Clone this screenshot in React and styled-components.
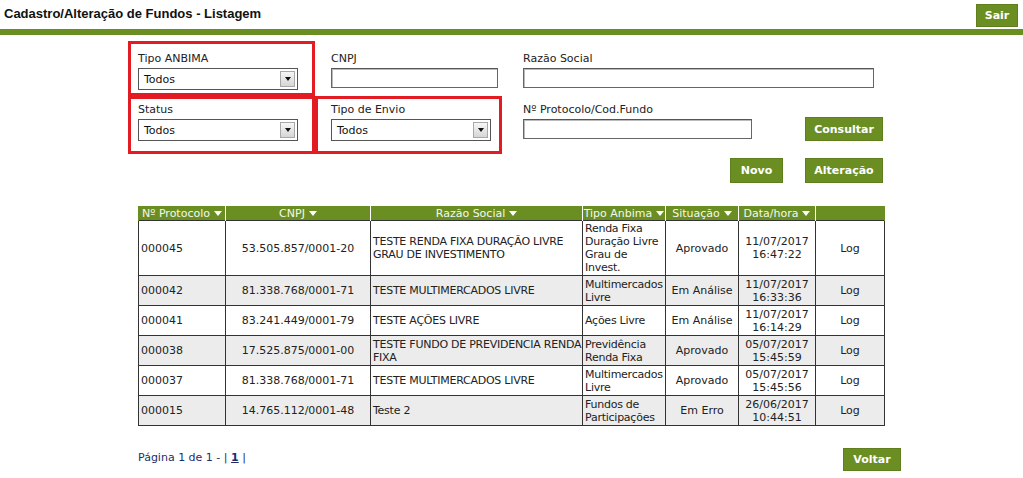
import React from 'react';
import styled, { createGlobalStyle } from 'styled-components';

const GREEN = '#6b8e23';
const RED = '#e31b23';

const GlobalStyle = createGlobalStyle`
  body {
    margin: 0;
    background: #ffffff;
    font-family: Verdana, 'DejaVu Sans', sans-serif;
    font-size: 11px;
    color: #222;
  }
`;

const rows = [
  { protocolo: '000045', cnpj: '53.505.857/0001-20', razao: 'TESTE RENDA FIXA DURAÇÃO LIVRE GRAU DE INVESTIMENTO', tipo: 'Renda Fixa Duração Livre Grau de Invest.', situacao: 'Aprovado', data: '11/07/2017', hora: '16:47:22' },
  { protocolo: '000042', cnpj: '81.338.768/0001-71', razao: 'TESTE MULTIMERCADOS LIVRE', tipo: 'Multimercados Livre', situacao: 'Em Análise', data: '11/07/2017', hora: '16:33:36' },
  { protocolo: '000041', cnpj: '83.241.449/0001-79', razao: 'TESTE AÇÕES LIVRE', tipo: 'Ações Livre', situacao: 'Em Análise', data: '11/07/2017', hora: '16:14:29' },
  { protocolo: '000038', cnpj: '17.525.875/0001-00', razao: 'TESTE FUNDO DE PREVIDENCIA RENDA FIXA', tipo: 'Previdência Renda Fixa', situacao: 'Aprovado', data: '05/07/2017', hora: '15:45:59' },
  { protocolo: '000037', cnpj: '81.338.768/0001-71', razao: 'TESTE MULTIMERCADOS LIVRE', tipo: 'Multimercados Livre', situacao: 'Aprovado', data: '05/07/2017', hora: '15:45:56' },
  { protocolo: '000015', cnpj: '14.765.112/0001-48', razao: 'Teste 2', tipo: 'Fundos de Participações', situacao: 'Em Erro', data: '26/06/2017', hora: '10:44:51' }
];

const columns = [
  { label: 'Nº Protocolo', width: 87 },
  { label: 'CNPJ', width: 145 },
  { label: 'Razão Social', width: 212 },
  { label: 'Tipo Anbima', width: 83 },
  { label: 'Situação', width: 73 },
  { label: 'Data/hora', width: 77 },
  { label: '', width: 69 }
];

const SortArrow = () => (
  <ArrowIcon width="8" height="5" viewBox="0 0 8 5">
    <path d="M0 0 L8 0 L4 5 Z" fill="#ffffff" />
  </ArrowIcon>
);

const Select = ({ value }) => (
  <SelectBox>
    <SelectText>{value}</SelectText>
    <SelectArrow>
      <svg width="6" height="4" viewBox="0 0 6 4">
        <path d="M0 0 L6 0 L3 4 Z" fill="#111" />
      </svg>
    </SelectArrow>
  </SelectBox>
);

export default function App() {
  return (
    <>
      <GlobalStyle />
      <Header>
        <Title>Cadastro/Alteração de Fundos - Listagem</Title>
        <Button $width={42}>Sair</Button>
      </Header>
      <GreenBar />

      <Form>
        <FilterGrid>
          <Cell $marked $top={8}>
            <Label>Tipo ANBIMA</Label>
            <Select value="Todos" />
          </Cell>
          <Cell $top={8} $left={13}>
            <Label>CNPJ</Label>
            <TextInput $width={167} />
          </Cell>
          <WideCell $top={11}>
            <Label>Razão Social</Label>
            <TextInput $width={351} />
          </WideCell>
          <Cell $marked $top={4}>
            <Label>Status</Label>
            <Select value="Todos" />
          </Cell>
          <Cell $marked $top={4} $left={13}>
            <Label>Tipo de Envio</Label>
            <Select value="Todos" />
          </Cell>
          <WideCell $top={7}>
            <SearchRow>
              <div>
                <Label>Nº Protocolo/Cod.Fundo</Label>
                <TextInput $width={229} />
              </div>
              <Button $width={78} $height={24} $drop={2}>
                Consultar
              </Button>
            </SearchRow>
          </WideCell>
        </FilterGrid>
        <ActionRow>
          <Button $width={53} $height={25}>Novo</Button>
          <Button $width={78} $height={25}>Alteração</Button>
        </ActionRow>
      </Form>

      <Table>
        <colgroup>
          {columns.map((c, i) => (
            <col key={i} style={{ width: c.width }} />
          ))}
        </colgroup>
        <thead>
          <tr>
            {columns.map((c, i) => (
              <Th key={i}>
                {c.label}
                {c.label && <SortArrow />}
              </Th>
            ))}
          </tr>
        </thead>
        <tbody>
          {rows.map((r, i) => (
            <Tr key={r.protocolo} $alt={i % 2 === 1}>
              <Td>{r.protocolo}</Td>
              <Td $center>{r.cnpj}</Td>
              <Td $tight>{r.razao}</Td>
              <Td $tight>{r.tipo}</Td>
              <Td $center>{r.situacao}</Td>
              <Td $center>
                {r.data}
                <br />
                {r.hora}
              </Td>
              <Td $center>Log</Td>
            </Tr>
          ))}
        </tbody>
      </Table>

      <Footer>
        <Pager>
          Página 1 de 1 - | <CurrentPage>1</CurrentPage> |
        </Pager>
        <Button $width={58}>Voltar</Button>
      </Footer>
    </>
  );
}

const Header = styled.div`
  display: flex;
  justify-content: space-between;
  align-items: flex-start;
  padding: 4px 5px 2px 4px;
  height: 23px;
`;

const Title = styled.h1`
  margin: 2px 0 0;
  font-family: 'Liberation Sans', Arial, sans-serif;
  font-size: 13px;
  font-weight: bold;
  color: #111;
`;

const GreenBar = styled.div`
  height: 6px;
  background: ${GREEN};
`;

const Button = styled.button`
  width: ${(p) => p.$width}px;
  height: ${(p) => p.$height || 23}px;
  margin-bottom: ${(p) => (p.$drop ? -p.$drop : 0)}px;
  padding: 0;
  border: 1px solid #5f7f1f;
  background: ${GREEN};
  color: #ffffff;
  font-family: Verdana, 'DejaVu Sans', sans-serif;
  font-size: 11px;
  font-weight: bold;
  cursor: pointer;
`;

const Form = styled.div`
  width: 756px;
  margin: 6px 0 0 128px;
`;

const FilterGrid = styled.div`
  display: grid;
  grid-template-columns: 187px 187px 382px;
  grid-template-rows: 55px 58px;
`;

const Cell = styled.div`
  box-sizing: border-box;
  border: 3px solid ${(p) => (p.$marked ? RED : 'transparent')};
  padding: ${(p) => p.$top}px 4px 0 ${(p) => (p.$left ? p.$left : 7)}px;
`;

const WideCell = styled.div`
  padding: ${(p) => p.$top}px 1px 0 21px;
`;

const Label = styled.div`
  line-height: 13px;
  margin-bottom: 3px;
  color: #222;
`;

const SelectBox = styled.div`
  box-sizing: border-box;
  display: flex;
  align-items: stretch;
  width: 160px;
  height: 22px;
  border: 1px solid #555;
  background: #fff;
`;

const SelectText = styled.span`
  flex: 1;
  padding: 4px 0 0 5px;
  color: #111;
`;

const SelectArrow = styled.span`
  width: 13px;
  margin: 2px;
  border: 1px solid #a8a8a8;
  background: linear-gradient(#f6f6f6, #d6d6d6);
  display: flex;
  align-items: center;
  justify-content: center;
`;

const TextInput = styled.input`
  box-sizing: border-box;
  display: block;
  width: ${(p) => p.$width}px;
  height: 20px;
  margin: 0;
  border: 1px solid #666;
  border-top-color: #555;
  box-shadow: inset 1px 1px 0 #bbb;
  background: #fff;
`;

const SearchRow = styled.div`
  display: flex;
  justify-content: space-between;
  align-items: flex-end;
`;

const ActionRow = styled.div`
  display: flex;
  justify-content: flex-end;
  gap: 22px;
  margin-top: 4px;
  padding-right: 1px;
`;

const Table = styled.table`
  margin: 23px 0 0 138px;
  width: 746px;
  border-collapse: collapse;
  table-layout: fixed;
  line-height: 13px;
`;

const ArrowIcon = styled.svg`
  margin-left: 4px;
  vertical-align: middle;
`;

const Th = styled.th`
  background: ${GREEN};
  color: #f4f8ec;
  font-weight: normal;
  padding: 0;
  height: 14px;
  border-left: 1px solid #ffffff;
  border-right: 1px solid #ffffff;
  white-space: nowrap;
  overflow: hidden;
  text-align: center;
  &:first-child {
    border-left: 1px solid ${GREEN};
  }
  &:last-child {
    border-right: 1px solid ${GREEN};
  }
`;

const Tr = styled.tr`
  height: 30px;
  background: ${(p) => (p.$alt ? '#ececec' : '#ffffff')};
`;

const Td = styled.td`
  border: 1px solid #333;
  padding: ${(p) => (p.$tight ? '1px 0 1px 2px' : '1px 2px')};
  letter-spacing: ${(p) => (p.$tight ? '-0.25px' : 'normal')};
  vertical-align: middle;
  text-align: ${(p) => (p.$center ? 'center' : 'left')};
  color: #222;
`;

const Footer = styled.div`
  display: flex;
  justify-content: space-between;
  align-items: flex-start;
  width: 763px;
  margin: 22px 0 0 138px;
`;

const Pager = styled.div`
  padding-top: 3px;
  color: #1c2d6b;
`;

const CurrentPage = styled.span`
  font-weight: bold;
  text-decoration: underline;
`;
